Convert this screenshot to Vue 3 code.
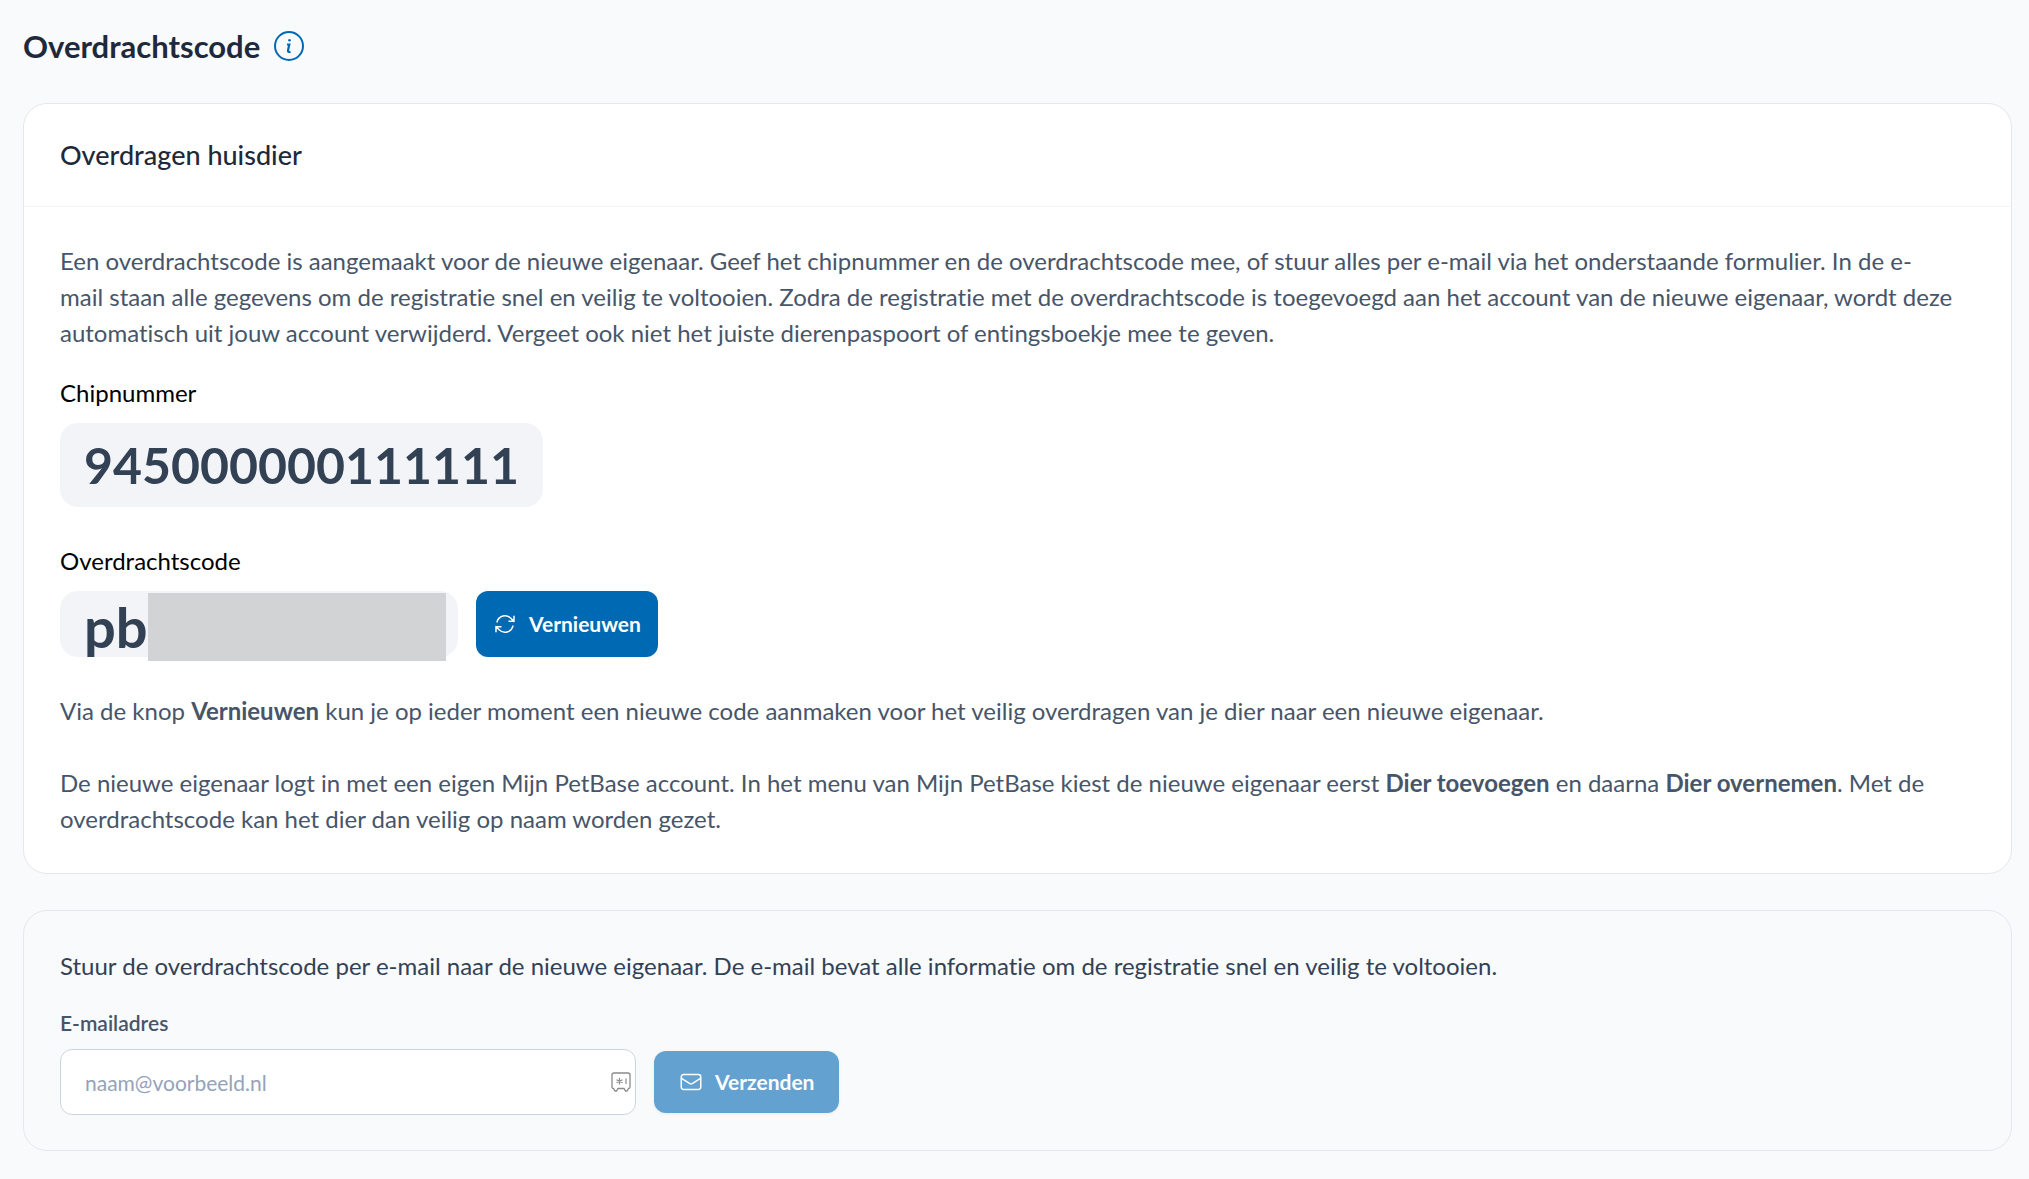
<script setup>
import { ref } from "vue";

const chipNumber = ref("945000000111111");
const transferCode = ref("pb");
const email = ref("");
</script>

<template>
  <main class="page">
    <header class="page-header">
      <h1>Overdrachtscode</h1>
      <button type="button" class="info-button" aria-label="Meer informatie">
        <svg viewBox="0 0 30 30" fill="none" stroke="currentColor">
          <circle cx="15" cy="15" r="14" stroke-width="2" />
          <path d="M13 13.500h2.300l-1.300 6q-.2 2 2.500 1.300" stroke-width="2.200" />
          <circle cx="15.500" cy="9.300" r="1.300" fill="currentColor" stroke="none" />
        </svg>
      </button>
    </header>

    <section class="card">
      <h2>Overdragen huisdier</h2>
      <div class="card-body">
        <p>
          Een overdrachtscode is aangemaakt voor de nieuwe eigenaar. Geef het chipnummer en de overdrachtscode mee, of stuur alles per e-mail via het onderstaande formulier. In de e-<br />mail staan alle gegevens om de registratie snel en veilig te voltooien. Zodra de registratie met de overdrachtscode is toegevoegd aan het account van de nieuwe eigenaar, wordt deze
          automatisch uit jouw account verwijderd. Vergeet ook niet het juiste dierenpaspoort of entingsboekje mee te geven.
        </p>

        <div class="field chip-field">
          <span class="field-label">Chipnummer</span>
          <div class="code-box">{{ chipNumber }}</div>
        </div>

        <div class="field">
          <span class="field-label">Overdrachtscode</span>
          <div class="row">
            <div class="code-box transfer-box">
              {{ transferCode }}<span class="mask"></span>
            </div>
            <button type="button" class="btn renew">
              <svg viewBox="0 0 24 24" fill="none" stroke="currentColor" stroke-width="1.5" stroke-linecap="round" stroke-linejoin="round">
                <path d="M16.023 9.348h4.992V4.356M2.985 19.644v-4.992h4.992M2.985 14.652l3.181 3.183a8.25 8.25 0 0 0 13.803-3.7M4.031 9.865a8.25 8.25 0 0 1 13.803-3.7l3.181 3.183" />
              </svg>
              Vernieuwen
            </button>
          </div>
        </div>

        <p class="hint">
          Via de knop <strong>Vernieuwen</strong> kun je op ieder moment een nieuwe code aanmaken voor het veilig overdragen van je dier naar een nieuwe eigenaar.
        </p>
        <p class="hint">
          De nieuwe eigenaar logt in met een eigen Mijn PetBase account. In het menu van Mijn PetBase kiest de nieuwe eigenaar eerst <strong>Dier toevoegen</strong> en daarna <strong>Dier overnemen</strong>. Met de
          overdrachtscode kan het dier dan veilig op naam worden gezet.
        </p>
      </div>
    </section>

    <form class="card mail-card" @submit.prevent>
      <p>Stuur de overdrachtscode per e-mail naar de nieuwe eigenaar. De e-mail bevat alle informatie om de registratie snel en veilig te voltooien.</p>
      <label for="email">E-mailadres</label>
      <div class="row">
        <div class="input-wrap">
          <input id="email" v-model="email" type="email" placeholder="naam@voorbeeld.nl" />
          <svg class="vault" viewBox="0 0 20 20" fill="none" stroke="currentColor">
            <path d="M3 1h14q2 0 2 2v12q0 1.5-1.5 1.5L16 19h-1.5L13 16.5H7L5.5 19H4l-1.500-2.500Q1 16.500 1 15V3q0-2 2-2z" stroke-width="1.3" />
            <path d="M8.500 6v6.500M5.500 7.800l6 3M11.500 7.800l-6 3M15 6.500v5.500" stroke-width="1.200" />
          </svg>
        </div>
        <button type="submit" class="btn send" :disabled="!email">
          <svg viewBox="0 0 24 24" fill="none" stroke="currentColor" stroke-width="1.5" stroke-linecap="round" stroke-linejoin="round">
            <path d="M21.750 6.750v10.500a2.250 2.250 0 0 1-2.250 2.250h-15a2.250 2.250 0 0 1-2.250-2.250V6.750m19.500 0A2.250 2.250 0 0 0 19.500 4.500h-15a2.250 2.250 0 0 0-2.250 2.250m19.500 0v.243a2.250 2.250 0 0 1-1.070 1.916l-7.500 4.615a2.250 2.250 0 0 1-2.360 0L3.320 8.910a2.250 2.250 0 0 1-1.070-1.916V6.750" />
          </svg>
          Verzenden
        </button>
      </div>
    </form>
  </main>
</template>

<style>
body {
  margin: 0;
  background: #f9fafc;
}
</style>

<style scoped>
.page {
  display: flex;
  flex-direction: column;
  gap: 36px;
  padding: 25px 17px 27px 23px;
  font-family: Lato, sans-serif;
  font-size: 24px;
  line-height: 36px;
  font-variant-ligatures: none;
  color: #475569;
}

h1,
h2,
p {
  margin: 0;
}

.page-header {
  display: flex;
  align-items: center;
  gap: 14px;
  height: 42px;
}

h1 {
  font-size: 31px;
  font-weight: 700;
  color: #1e293b;
}

.info-button {
  width: 30px;
  height: 30px;
  padding: 0;
  border: 0;
  background: none;
  color: #0069b4;
}

.info-button svg {
  display: block;
}

.card {
  border: 1px solid #e5e7eb;
  border-radius: 24px;
  background: #fff;
}

h2 {
  padding: 33px 36px;
  border-bottom: 1px solid #f3f4f6;
  font-size: 27px;
  font-weight: 500;
  color: #1e293b;
}

.card-body {
  padding: 36px;
}

.field {
  display: flex;
  flex-direction: column;
  align-items: flex-start;
  gap: 12px;
}

.chip-field {
  margin: 24px 0 36px;
}

.field-label {
  color: #000;
}

.code-box {
  box-sizing: border-box;
  height: 84px;
  padding: 0 24px;
  border-radius: 18px;
  background: #f3f4f8;
  font-size: 50px;
  font-weight: 700;
  line-height: 84px;
  color: #334155;
}

.row {
  display: flex;
  align-items: center;
  gap: 18px;
}

.transfer-box {
  position: relative;
  width: 398px;
  height: 66px;
  font-size: 56px;
  line-height: 72px;
}

/* grey block over the hidden part of the code */
.mask {
  position: absolute;
  top: 2px;
  right: 12px;
  width: 298px;
  height: 68px;
  background: #d1d3d5;
}

.btn {
  display: flex;
  align-items: center;
  gap: 12px;
  border: 0;
  border-radius: 12px;
  background: #0069b4;
  font: 700 21px/30px Lato, sans-serif;
  color: #fff;
}

.btn svg {
  width: 24px;
  height: 24px;
}

.renew {
  height: 66px;
  padding: 0 17px;
}

.send {
  height: 62px;
  padding: 0 25px;
  box-shadow: 0 1px 3px rgba(0, 0, 0, 0.1);
}

.send:disabled {
  opacity: 0.6;
}

.hint {
  margin-top: 36px;
}

.mail-card {
  padding: 37px 36px 35px;
  background: #f9fafc;
}

.mail-card p {
  color: #334155;
}

label {
  display: block;
  margin: 24px 0 11px;
  font-size: 21px;
  font-weight: 600;
  line-height: 30px;
}

.input-wrap {
  position: relative;
  width: 576px;
}

input {
  box-sizing: border-box;
  width: 100%;
  height: 66px;
  padding: 0 48px 0 24px;
  border: 1px solid #cbd5e1;
  border-radius: 12px;
  background: #fff;
  font: 21px/30px Lato, sans-serif;
  color: #334155;
}

input::placeholder {
  color: #94a3b8;
}

.vault {
  position: absolute;
  top: 23px;
  right: 5px;
  width: 20px;
  height: 20px;
  color: #8a8a8a;
}
</style>
